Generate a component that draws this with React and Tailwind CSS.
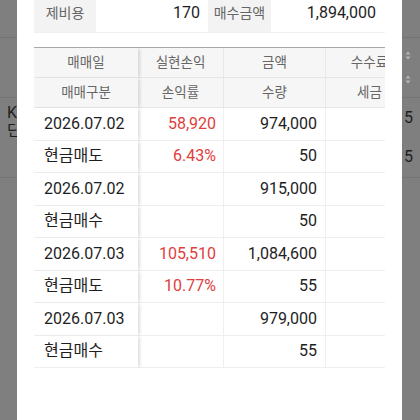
import { Fragment } from 'react'

const rows = [
  { a: '2026.07.02', b: '58,920', c: '974,000', red: true },
  { a: '현금매도', b: '6.43%', c: '50', red: true },
  { a: '2026.07.02', b: '', c: '915,000' },
  { a: '현금매수', b: '', c: '50' },
  { a: '2026.07.03', b: '105,510', c: '1,084,600', red: true },
  { a: '현금매도', b: '10.77%', c: '55', red: true },
  { a: '2026.07.03', b: '', c: '979,000' },
  { a: '현금매수', b: '', c: '55' },
]

const SortIcon = () => (
  <svg width="6" height="9" viewBox="0 0 6 9" className="text-[#b5b5b5]">
    <path d="M3 0.5 L5.5 3.5 H0.5 Z M3 8.5 L5.5 5.5 H0.5 Z" fill="currentColor" />
  </svg>
)

const App = () => {
  return (
    <div
      className="relative h-[420px] w-[420px] overflow-hidden bg-[#7f7f7f] text-[#1e1e1e]"
      style={{ fontFamily: 'Roboto, "Noto Sans CJK KR", sans-serif' }}
    >
      {/* page behind the dimmed overlay */}
      <div className="flex flex-col">
        <div className="h-[38px] border-b border-[#737373]" />
        <div className="flex h-[60px] flex-col items-end justify-around border-b border-[#737373] pr-[9px] py-[6px]">
          <SortIcon />
          <SortIcon />
        </div>
        <div className="flex h-[80px] justify-between border-b border-[#737373]">
          <div className="flex flex-col pl-[7px] pt-[6px] text-[16px] leading-[18px]">
            <span>K</span>
            <span>단</span>
          </div>
          <div className="flex flex-col justify-around pr-[7px] text-[16px] leading-[18px]">
            <span>5</span>
            <span>5</span>
          </div>
        </div>
      </div>

      {/* modal */}
      <div className="absolute left-[17px] top-0 h-full w-[385px] bg-white px-[17px]">
        {/* summary row */}
        <div className="-mt-[6px] grid h-[39px] grid-cols-[62px_112px_63px_112px] items-stretch border-b border-[#f0f0f0]">
          <div className="flex items-center justify-center bg-[#f3f3f3] text-[14px] text-[#666]">제비용</div>
          <div className="flex items-center justify-end pr-[8px] text-[16px]">170</div>
          <div className="flex items-center justify-center bg-[#f3f3f3] text-[14px] text-[#666]">매수금액</div>
          <div className="flex items-center justify-end pr-[7px] text-[16px]">1,894,000</div>
        </div>

        {/* detail table */}
        <div className="mt-[14px] w-[351px] overflow-hidden border-t border-[#a8a8a8]">
          <div className="grid w-[379px] grid-cols-[104px_85px_102px_88px]">
            {[
              ['매매일', '실현손익', '금액', '수수료'],
              ['매매구분', '손익률', '수량', '세금'],
            ].map((hr, i) => (
              <Fragment key={i}>
                {hr.map((h, j) => (
                  <div
                    key={j}
                    className={`flex h-[30px] items-center justify-center border-b border-[#e6e6e6] bg-[#f6f6f6] text-[13.5px] text-[#666] ${
                      j === 0 ? 'relative z-10 shadow-[3px_0_3px_-1px_rgba(0,0,0,0.13)]' : 'border-l border-l-[#e8e8e8]'
                    } ${j === 1 ? 'border-l-0' : ''}`}
                  >
                    {h}
                  </div>
                ))}
              </Fragment>
            ))}
            {rows.map((r, i) => (
              <Fragment key={i}>
                <div className="relative z-10 flex h-[32.5px] items-center border-b border-[#efefef] bg-white pl-[10px] text-[16px] shadow-[3px_0_3px_-1px_rgba(0,0,0,0.13)]">
                  {r.a}
                </div>
                <div className="flex h-[32.5px] items-center justify-end border-b border-[#efefef] pr-[7px] text-[16px] text-[#e0403c]">
                  {r.b}
                </div>
                <div className="flex h-[32.5px] items-center justify-end border-b border-l border-[#efefef] pr-[8px] text-[16px]">
                  {r.c}
                </div>
                <div className="h-[32.5px] border-b border-l border-[#efefef]" />
              </Fragment>
            ))}
          </div>
        </div>
      </div>
    </div>
  )
}

export default App
